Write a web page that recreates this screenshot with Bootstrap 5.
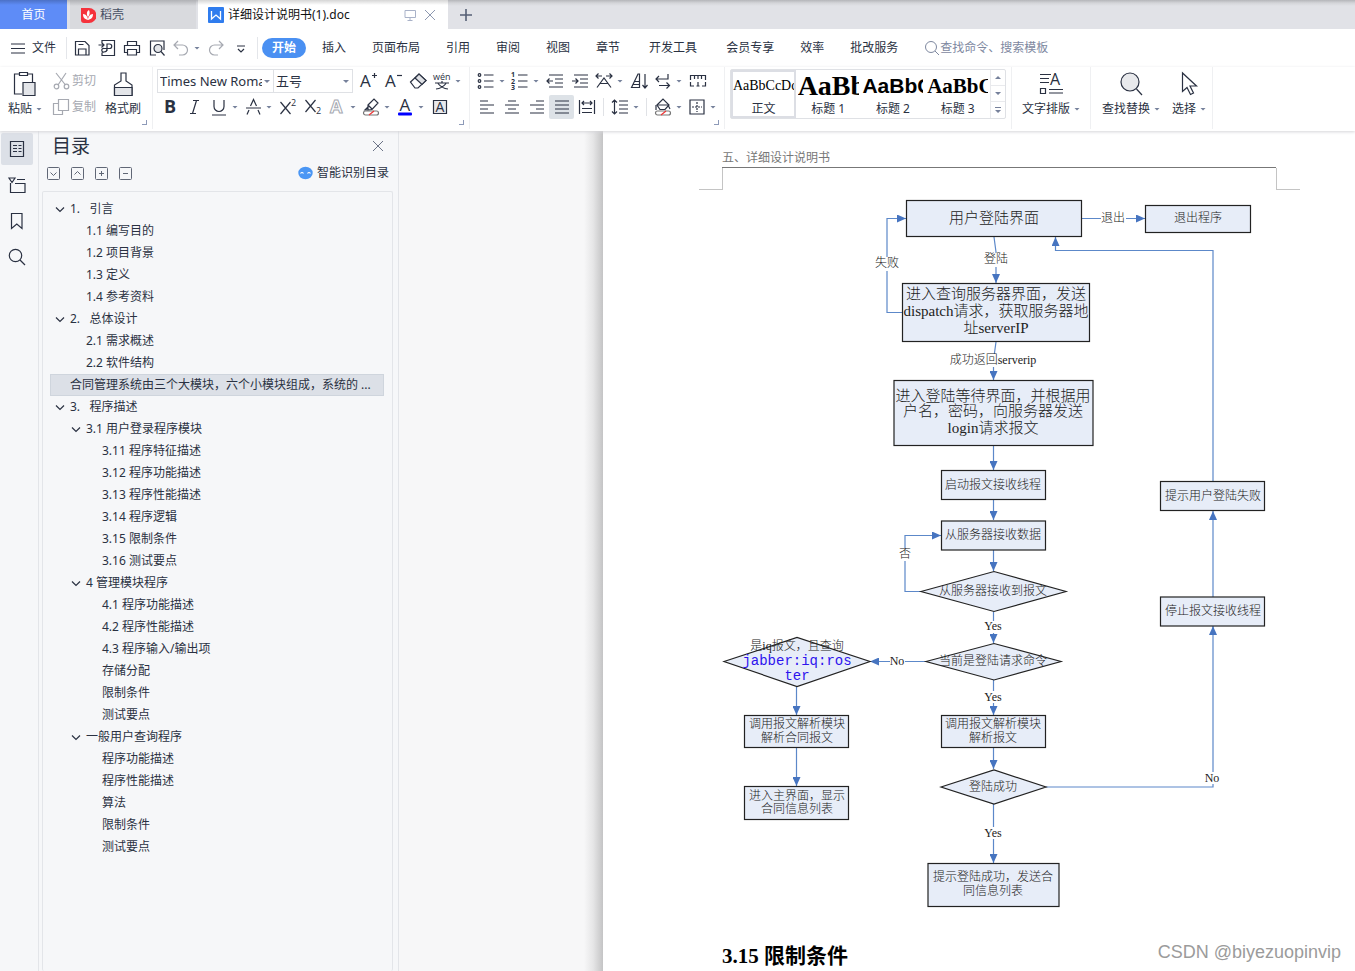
<!DOCTYPE html>
<html lang="zh-CN">
<head>
<meta charset="utf-8">
<meta name="viewport" content="width=device-width, initial-scale=1">
<title>详细设计说明书(1).doc</title>
<link rel="stylesheet" href="https://cdn.jsdelivr.net/npm/bootstrap@5.3.0/dist/css/bootstrap.min.css">
<style>
:root{--ink:#2a3142;--muted:#7e889f;--line:#e3e5e9;--pane:#f6f7f9}
body{font:12px/18px "Noto Sans","Noto Sans CJK SC",sans-serif;color:var(--ink);background:#f7f7f8;overflow:hidden}
button{font:inherit;color:inherit;background:none;border:0;padding:0}
a{color:inherit;text-decoration:none}
svg{display:block;flex:none}
.ico{width:20px;height:20px;fill:none;stroke:var(--ink);stroke-width:1.2;overflow:visible}
.ico text,.big text{stroke:none;fill:var(--ink);font-family:"Open Sans",sans-serif}
.big{width:28px;height:28px;fill:none;stroke:var(--ink);stroke-width:1.2;overflow:visible}
.off,.off .ico{color:#a6a9b1;stroke:#a6a9b1}
.tri{width:6px;height:3px;background:#76819b;clip-path:polygon(0 0,100% 0,50% 100%);flex:none}
/* title tabs */
.tabstrip{height:29px;background:linear-gradient(#b4b5b9,#d4d5d9 3px,#e1e2e7 6px)}
.tab-home{width:67px;background:linear-gradient(#4c71c6,#5e8cf7 5px);color:#fff}
.tab-docer{width:126px;margin-left:3px;padding-left:10px;background:linear-gradient(#b0b1b5,#d9dade 6px);color:#475064}
.tab-doc{width:250px;margin-left:2px;padding-left:10px;background:linear-gradient(#d5d5d5,#fff 5px);color:#111}
/* menu */
.menubar{height:38px;background:#fff}
.menubar .item{padding:0 13px}
.menubar .wide{margin:0 3px}
.menubar .pill{width:44px;height:20px;border-radius:10px;background:#4a90f2;color:#fff;font-weight:bold;margin-right:3px}
.menubar .file{padding:0 10px 0 8px}
.quick{padding-left:2px}
.vr-line{width:1px;background:#e4e6ea}
.qa{width:25px;display:flex;justify-content:center;align-items:center}
.finder{width:130px;border:0;outline:0;padding:0;color:var(--muted)}
.finder::placeholder{color:var(--muted);opacity:1}
/* ribbon */
.ribbon{height:64px;background:#fff;box-shadow:0 1px 3px #d5d6d9;position:relative;z-index:2}
.group{border-right:1px solid #eff0f2;height:62px;position:relative}
.launch::after{content:"";position:absolute;right:5px;bottom:4px;width:5px;height:5px;border:solid #8d9ab8;border-width:0 1px 1px 0}
.g-clip{width:153px;padding:3px 0 0 8px}
.g-font{width:317px;padding:1px 0 0 4px}
.g-para{width:255px;padding:1px 0 0 4px}
.g-style{width:287px;padding:2px 0 0 5px}
.g-type{width:79px;padding-top:3px}
.g-find{width:122px;padding:3px 0 0 11px}
.clip-side{margin:-2px 9px 0 10px}
.trow{height:26px;display:flex;align-items:center}
.t{width:25px;height:24px;display:flex;align-items:center;justify-content:center;border-radius:2px}
.td{width:34px;height:24px;display:flex;align-items:center;padding-left:2px;gap:3px}
.t.sel{background:#dde2e7}
.gap-line{width:9px;height:18px;background:linear-gradient(#e0e2e6,#e0e2e6) 4px 0/1px 100% no-repeat}
.combo{position:relative;height:24px;border:1px solid #dfe1e5}
.combo select{appearance:none;border:0;background:none;font:13px/20px "Noto Sans","Noto Sans CJK SC",sans-serif;color:var(--ink);width:100%;height:22px;padding:0 11px 0 2px}
.combo .tri{position:absolute;right:3px;top:10px;pointer-events:none}
.c-face{width:117px}.c-size{width:79px;margin-right:2px}
.stack{display:flex;flex-direction:column;align-items:center;justify-content:space-between;height:48px}
.gallery{width:276px;height:50px;border:1px solid #dfe1e5;border-radius:2px}
.style-item{width:65px;height:48px;overflow:hidden;display:flex;flex-direction:column;align-items:center;justify-content:flex-end}
.style-item .demo{width:61px;overflow:hidden;white-space:nowrap;text-align:left;color:#000;height:28px;line-height:28px}
.style-item.on{box-shadow:inset 0 0 0 2px #dcdee4}
.d0{font-family:"Liberation Serif",serif;font-size:14px}
.d1{font-family:"Liberation Serif",serif;font-size:28px;font-weight:bold}
.d2{font-family:"Liberation Sans",sans-serif;font-size:21px;font-weight:bold}
.d3{font-family:"Liberation Serif",serif;font-size:21px;font-weight:bold}
.spin{width:15px;border-left:1px solid #e9eaed}
.spin button{height:16px;display:flex;flex-direction:column;gap:2px;align-items:center;justify-content:center;border-bottom:1px solid #e9eaed}
.spin .up{rotate:180deg}
.spin .dash{width:6px;height:1px;background:#76819b}
/* side */
.rail{width:39px;background:var(--pane);border-right:1px solid var(--line);padding-top:2px}
.rail button{width:32px;height:32px;margin:0 0 4px 1px;display:flex;align-items:center;justify-content:center;border-radius:2px}
.rail .sel{background:#dce0e7}
.outline{width:360px;background:var(--pane);border-right:1px solid var(--line);padding:0 5px 0 3px}
.outline h1{font-size:19px;line-height:30px;font-weight:400;margin:0}
.outline .head{padding:0 9px 0 10px}
.outline .tools{padding:3px 4px 0 5px;gap:11px}
.tree{border:1px solid var(--line);border-bottom:0;border-radius:2px;padding:6px 8px 0 7px;margin:9px 0 0}
.tree a{display:flex;align-items:center;height:22px;white-space:pre}
.tree .l1{padding-left:4px}.tree .l2{padding-left:20px}.tree .l3{padding-left:36px}
.tree .l4{padding-left:52px}
.tree .cur{background:#dce0e7;box-shadow:inset 0 0 0 1px #cfd5dd;padding-left:20px}
.tree svg{width:16px;height:16px;fill:none;stroke:var(--ink);stroke-width:1.2}
.sq{width:13px;height:13px;stroke:#606776;stroke-width:1;fill:none}
/* document */
.gutter{flex:0 0 204px;background:linear-gradient(90deg,#f7f7f8 185px,#e6e6e7 194px,#c4c4c5)}
.sheet{background:#fff;padding:18px 55px 0 96px;min-width:0}
.runhead{margin:0 24px 0 23px;border-bottom:1px solid #777;color:#777;height:19px;line-height:18px;font-family:"Liberation Serif","Noto Sans CJK SC",serif}
.crop{height:22px}
.crop i{width:24px;border-bottom:1px solid #c4c4c4}
.crop i:first-child{border-right:1px solid #c4c4c4}.crop i:last-child{border-left:1px solid #c4c4c4}
.flow{width:100%;height:auto;font-family:"Liberation Serif","Noto Sans CJK SC",serif;text-anchor:middle}
.flow .n{fill:#e7edf8;stroke:#222;stroke-width:1.2}
.flow .e{fill:none;stroke:#5c88c9;stroke-width:1.2;marker-end:url(#arr)}
.flow .gapbox{fill:#fff}
.flow text{font-size:12px;fill:#222;font-weight:300}
.flow .lg text{font-size:15px}
.flow .code{font:14px "Liberation Mono",monospace;fill:#2d14ee}
.sheet h2{font:bold 21px/28px "Liberation Serif","Noto Sans CJK SC",serif;color:#000;margin:22px 0 0 23px}
.mark-by{position:absolute;right:14px;bottom:6px;font:18px/26px "Liberation Sans",sans-serif;color:#9b9b9b}
</style>
<script src="https://cdn.jsdelivr.net/npm/bootstrap@5.3.0/dist/js/bootstrap.bundle.min.js"></script>
</head>
<body class="d-flex flex-column vh-100 position-relative">

<header class="flex-shrink-0">
<div class="tabstrip d-flex">
  <button class="tab-home" type="button">首页</button>
  <button class="tab-docer d-flex align-items-center" type="button">
    <svg width="16" height="16" viewBox="0 0 16 16" class="me-1"><path d="M1 1h8a7 7 0 0 1 0 15H4a3 3 0 0 1-3-3z" fill="#f5323c"/><path d="M8 13C4 12 3 10 3 7c3 0 5 3 5 6zm0-3C6 7 7 4 9 3c1 2 1 5-1 7zm0 3c0-3 2-6 5-6 0 3-1 5-5 6z" fill="#fff"/></svg>稻壳</button>
  <div class="tab-doc d-flex align-items-center">
    <svg width="16" height="16" viewBox="0 0 16 16" class="me-1"><rect width="16" height="16" rx="1" fill="#2f7cee"/><path d="M3.500 4v8L8 8l4.500 4V4" fill="none" stroke="#fff" stroke-width="1.300"/></svg>
    <span class="flex-grow-1">详细设计说明书(1).doc</span>
    <svg class="me-2" width="12" height="12" viewBox="0 0 12 12" fill="none" stroke="#a9b2c8"><path d="M1 1.500h10.500v7H1zM6 8.500v3M3.500 11.500h5"/></svg>
    <button type="button" aria-label="关闭" class="me-2 pe-1"><svg width="12" height="12" viewBox="0 0 12 12" stroke="#8d98b0"><path d="M1 1l10 10M11 1L1 11"/></svg></button>
  </div>
  <button type="button" aria-label="新建" class="ms-2 ps-1"><svg width="12" height="12" viewBox="0 0 12 12" stroke="#555f75" stroke-width="1.600"><path d="M6 0v12M0 6h12"/></svg></button>
</div>

<nav class="menubar d-flex align-items-center" aria-label="菜单">
  <button type="button" class="file d-flex align-items-center"><svg class="ico" viewBox="0 0 20 20"><path d="M3 6h14M3 10.500h14M3 15h14"/></svg><span class="ms-1">文件</span></button>
  <i class="vr-line align-self-stretch my-2"></i>
  <span class="quick d-flex">
  <button class="qa" type="button" aria-label="保存"><svg class="ico" viewBox="0 0 20 20"><path d="M3.500 3.500h9.500l4 4v9.500h-13.500zM6.500 17v-6h7.500v6M6.500 6.500h5"/></svg></button>
  <button class="qa" type="button" aria-label="输出为PDF"><svg class="ico" viewBox="0 0 20 20"><path d="M5 4.500V2.500h12.500v15H5v-3M1.500 7h5M4.500 4.500L7 7 4.500 9.500M10 13V6h2.500a2.200 2.200 0 0 1 0 4.500H7a1.800 1.800 0 1 0 0 3.500q3 0 3-3"/></svg></button>
  <button class="qa" type="button" aria-label="打印"><svg class="ico" viewBox="0 0 20 20"><path d="M5.500 7.500v-4h9v4M5.500 14.500H2.500v-7h15v7h-3M5.500 11.500h9v5.500h-9z"/></svg></button>
  <button class="qa" type="button" aria-label="打印预览"><svg class="ico" viewBox="0 0 20 20"><path d="M9 17H3.500V3H17v9"/><circle cx="11" cy="10.500" r="4" fill="#e3e5e9"/><path d="M14 13.500l3.500 4"/></svg></button>
  <button class="td off" type="button" aria-label="撤销"><svg class="ico" viewBox="0 0 20 20"><path d="M7 3L3 7l4 4M3 7h8.500a5 5 0 0 1 0 10H8"/></svg><i class="tri"></i></button>
  <button class="qa off" type="button" aria-label="恢复"><svg class="ico" viewBox="0 0 20 20"><path d="M13 3l4 4-4 4M17 7H8.500a5 5 0 0 0 0 10H12"/></svg></button>
  <button class="qa" type="button" aria-label="更多"><svg class="ico" viewBox="0 0 20 20"><path d="M6 8h8M7 11l3 3 3-3"/></svg></button>
  </span>
  <i class="vr-line align-self-stretch my-2 ms-1 me-1"></i>
  <button type="button" class="pill">开始</button>
  <button type="button" class="item">插入</button><button type="button" class="item">页面布局</button><button type="button" class="item">引用</button><button type="button" class="item">审阅</button><button type="button" class="item">视图</button><button type="button" class="item">章节</button><button type="button" class="item wide">开发工具</button><button type="button" class="item">会员专享</button><button type="button" class="item">效率</button><button type="button" class="item">批改服务</button>
  <label class="d-flex align-items-center ms-2 ps-1"><svg width="17" height="16" viewBox="0 0 17 16" fill="none" stroke="#7e889f"><circle cx="8" cy="7" r="5.500"/><path d="M12 11l4 4"/></svg><input class="finder" aria-label="查找命令、搜索模板" placeholder="查找命令、搜索模板"></label>
</nav>

<div class="ribbon d-flex">
  <div class="group launch g-clip d-flex">
    <button type="button" class="stack"><svg class="big" viewBox="0 0 28 28"><path d="M9 4H3.500v20H11M17 4h4.500v8M8.500 2.500h8v3h-8z"/><path d="M12 12.500h12v13H12z" fill="#e3e5e9"/></svg><span class="d-flex align-items-center gap-1">粘贴<i class="tri"></i></span></button>
    <div class="clip-side d-flex flex-column off">
      <button type="button" class="trow"><svg class="ico" viewBox="0 0 20 20"><path d="M4 2l9.500 12M14 2L6 14"/><circle cx="4.500" cy="15.500" r="2.300"/><circle cx="14.500" cy="15.500" r="2.300"/></svg>剪切</button>
      <button type="button" class="trow"><svg class="ico" viewBox="0 0 20 20"><path d="M6.500 2.500h10v11h-10zM6.500 6.500h-5v11h9v-4"/></svg>复制</button>
    </div>
    <button type="button" class="stack"><svg class="big" viewBox="0 0 28 28"><path d="M12 11V3h5v8l6 4v10.500H5.500V15z"/><path d="M5.500 17.500H23v8H5.500z" fill="#e3e5e9"/></svg>格式刷</button>
  </div>

  <div class="group launch g-font">
    <div class="trow">
      <div class="combo c-face"><select aria-label="字体"><option>Times New Roman</option></select><i class="tri"></i></div>
      <div class="combo c-size border-start-0"><select aria-label="字号"><option>五号</option></select><i class="tri"></i></div>
      <button class="t" type="button" aria-label="增大字号"><svg class="ico" viewBox="0 0 20 20"><text x="2" y="16" font-size="17">A</text><path d="M14 4.500h5M16.500 2v5"/></svg></button>
      <button class="t" type="button" aria-label="减小字号"><svg class="ico" viewBox="0 0 20 20"><text x="2" y="16" font-size="17">A</text><path d="M14 4.500h5"/></svg></button>
      <button class="t" type="button" aria-label="清除格式"><svg class="ico" viewBox="0 0 20 20"><path d="M2.500 11L11 3l7 6.500-8 7.500H7z"/><path d="M7 7l7 6.500 4-4L11 3z" fill="#dfe1e5"/></svg></button>
      <button class="td" type="button" aria-label="拼音指南"><svg class="ico" viewBox="0 0 20 20"><text x="1" y="9" font-size="9">wén</text><path d="M3 12h14M10 10v2M6 12.500q4 5 10 5.500M14 12.500q-4 5-10 5.500"/></svg><i class="tri"></i></button>
    </div>
    <div class="trow">
      <button class="t" type="button" aria-label="加粗"><svg class="ico" viewBox="0 0 20 20"><text x="4" y="16" font-size="18" font-weight="bold">B</text></svg></button>
      <button class="t" type="button" aria-label="倾斜"><svg class="ico" viewBox="0 0 20 20"><path d="M8 3.500h6M5 16.500h6M11.500 3.500l-4 13"/></svg></button>
      <button class="td" type="button" aria-label="下划线"><svg class="ico" viewBox="0 0 20 20"><path d="M5 3v6.500a5 5 0 0 0 10 0V3M3 18h14"/></svg><i class="tri"></i></button>
      <button class="td" type="button" aria-label="删除线"><svg class="ico" viewBox="0 0 20 20"><path d="M3 11h15M7.500 9L10.500 2.500 13.500 9M6 13l-2 4.500M15 13l2 4.500"/></svg><i class="tri"></i></button>
      <button class="t" type="button" aria-label="上标"><svg class="ico" viewBox="0 0 20 20"><path d="M2.500 5l10 12M12.500 5l-10 12"/><text x="13" y="9" font-size="9">2</text></svg></button>
      <button class="t" type="button" aria-label="下标"><svg class="ico" viewBox="0 0 20 20"><path d="M2.500 3l10 12M12.500 3l-10 12"/><text x="13" y="17" font-size="9">2</text></svg></button>
      <button class="td" type="button" aria-label="文字效果"><svg class="ico" viewBox="0 0 20 20"><text x="3" y="16" font-size="18" font-weight="bold" style="fill:#fff;stroke:#a6a9b1;stroke-width:1">A</text></svg><i class="tri"></i></button>
      <button class="td" type="button" aria-label="突出显示"><svg class="ico" viewBox="0 0 20 20"><path d="M7 8l6-6 4 4-6 6.500-4 .5zM7 8l4 4M7 10l-3 3h5"/><rect x="2.500" y="14" width="15" height="4" rx="2" stroke="#777"/><path d="M8 18l5-4" stroke="#e33"/></svg><i class="tri"></i></button>
      <button class="td" type="button" aria-label="字体颜色"><svg class="ico" viewBox="0 0 20 20"><text x="4.500" y="14" font-size="17">A</text><rect x="3" y="15.500" width="14" height="3" rx="1" fill="#00f" stroke="none"/></svg><i class="tri"></i></button>
      <button class="t" type="button" aria-label="字符底纹"><svg class="ico" viewBox="0 0 20 20"><path d="M3.500 3.500h13v13h-13z" fill="#e8e9ec"/><text x="5.500" y="15" font-size="14">A</text></svg></button>
    </div>
  </div>

  <div class="group launch g-para">
    <div class="trow">
      <button class="td" type="button" aria-label="项目符号"><svg class="ico" viewBox="0 0 20 20"><path d="M8 4h9.500M8 10h9.500M8 16h9.500"/><circle cx="3.500" cy="4" r="1.300"/><circle cx="3.500" cy="10" r="1.300"/><circle cx="3.500" cy="16" r="1.300"/></svg><i class="tri"></i></button>
      <button class="td" type="button" aria-label="编号"><svg class="ico" viewBox="0 0 20 20"><path d="M8 4h9.500M8 10h9.500M8 16h9.500"/><text x="1" y="6" font-size="7" font-weight="bold">1</text><text x="1" y="12.500" font-size="7" font-weight="bold">2</text><text x="1" y="19" font-size="7" font-weight="bold">3</text></svg><i class="tri"></i></button>
      <button class="t" type="button" aria-label="减少缩进"><svg class="ico" viewBox="0 0 20 20"><path d="M4 4h14M10 8h8M10 12h8M4 16h14M2 10h6M4.500 7.500L2 10l2.500 2.500"/></svg></button>
      <button class="t" type="button" aria-label="增加缩进"><svg class="ico" viewBox="0 0 20 20"><path d="M4 4h14M10 8h8M10 12h8M4 16h14M2 10h6M5.500 7.500L8 10l-2.500 2.500"/></svg></button>
      <button class="td" type="button" aria-label="中文版式"><svg class="ico" viewBox="0 0 20 20"><path d="M3 16.500L10 7l7 9.500M6 12.500h8M2 5h6M4.500 2.500L2 5l2.500 2.500M18 5h-6M15.500 2.500L18 5l-2.500 2.500"/></svg><i class="tri"></i></button>
      <button class="t" type="button" aria-label="排序"><svg class="ico" viewBox="0 0 20 20"><path d="M2.500 16.500L9 3h1.500v13.500zM6 10.500h4.500M4.500 13.500h6M16 3v13.500M13.500 14l2.500 3 2.500-3"/></svg></button>
      <button class="td" type="button" aria-label="换行"><svg class="ico" viewBox="0 0 20 20"><path d="M15 3v5H3M6 5L3 8l3 3M6 14.500h10.500M13.500 11.500l3 3-3 3"/></svg><i class="tri"></i></button>
      <button class="t" type="button" aria-label="制表位"><svg class="ico" viewBox="0 0 20 20"><path d="M2.500 9V4.500h15V9M6.500 5v3M10 5v3M13.500 5v3M2.500 11v4H6M8.500 15h3M10 11v4M14 15h3.500v-4"/></svg></button>
    </div>
    <div class="trow">
      <button class="t" type="button" aria-label="左对齐"><svg class="ico" viewBox="0 0 20 20"><path d="M3 4h8M3 8h14M3 12h8M3 16h14"/></svg></button>
      <button class="t" type="button" aria-label="居中"><svg class="ico" viewBox="0 0 20 20"><path d="M6 4h8M3 8h14M6 12h8M3 16h14"/></svg></button>
      <button class="t" type="button" aria-label="右对齐"><svg class="ico" viewBox="0 0 20 20"><path d="M9 4h8M3 8h14M9 12h8M3 16h14"/></svg></button>
      <button class="t sel" type="button" aria-label="两端对齐" aria-pressed="true"><svg class="ico" viewBox="0 0 20 20"><path d="M3 4h14M3 8h14M3 12h14M3 16h14"/></svg></button>
      <button class="t" type="button" aria-label="分散对齐"><svg class="ico" viewBox="0 0 20 20"><path d="M2.500 3v14M17.500 3v14M5 11.500h10M5 15.500h10M5 6h10M7 4L5 6l2 2M13 4l2 2-2 2"/></svg></button>
      <i class="gap-line"></i>
      <button class="td" type="button" aria-label="行距"><svg class="ico" viewBox="0 0 20 20"><path d="M9 4h9M9 8h9M9 12h9M9 16h9M4.500 3v14M2 5.500L4.500 3 7 5.500M2 14.500L4.500 17 7 14.500"/></svg><i class="tri"></i></button>
      <i class="gap-line"></i>
      <button class="td" type="button" aria-label="底纹颜色"><svg class="ico" viewBox="0 0 20 20"><path d="M4 8l6-6 6 6-4 4.500H7z"/><path d="M5 8h10l2 4M3 8v5"/><rect x="2.500" y="14" width="15" height="4" rx="2" stroke="#777"/><path d="M8 18l5-4" stroke="#e33"/></svg><i class="tri"></i></button>
      <button class="td" type="button" aria-label="边框"><svg class="ico" viewBox="0 0 20 20"><path d="M3 3h14v14H3z"/><path d="M10 5v10M5 10h10" stroke-dasharray="2 1"/></svg><i class="tri"></i></button>
    </div>
  </div>

  <div class="group g-style">
    <div class="gallery d-flex">
      <button type="button" class="style-item on"><span class="demo d0">AaBbCcDd</span>正文</button>
      <button type="button" class="style-item"><span class="demo d1">AaBb</span>标题 1</button>
      <button type="button" class="style-item"><span class="demo d2">AaBbC</span>标题 2</button>
      <button type="button" class="style-item"><span class="demo d3">AaBbC</span>标题 3</button>
      <div class="spin d-flex flex-column"><button type="button" aria-label="上一行"><i class="tri up"></i></button><button type="button" aria-label="下一行"><i class="tri"></i></button><button type="button" aria-label="更多样式" class="border-0"><i class="dash"></i><i class="tri"></i></button></div>
    </div>
  </div>

  <div class="group g-type d-flex justify-content-center">
    <button type="button" class="stack"><svg class="big" viewBox="0 0 28 28"><path d="M3 4.500h11M3 8.500h9M3 12.500h9M12 19.500h14M12 23h14M3.500 18.500h5v5h-5z"/><text x="13" y="15" font-size="16">A</text></svg><span class="d-flex align-items-center gap-1">文字排版<i class="tri"></i></span></button>
  </div>
  <div class="group g-find d-flex">
    <button type="button" class="stack"><svg class="big" viewBox="0 0 28 28"><circle cx="13" cy="12" r="9" fill="#e8e9ec"/><path d="M19.500 19l5.500 6"/></svg><span class="d-flex align-items-center gap-1">查找替换<i class="tri"></i></span></button>
    <button type="button" class="stack ms-2 ps-1"><svg class="big" viewBox="0 0 28 28"><path d="M7.500 3v18.500l4.500-4 3.500 7 3-1.500-3.500-7h6.500z"/></svg><span class="d-flex align-items-center gap-1">选择<i class="tri"></i></span></button>
  </div>
</div>
</header>

<main class="d-flex flex-grow-1 overflow-hidden">
  <nav class="rail flex-shrink-0" aria-label="导航窗格">
    <button type="button" class="sel" aria-label="目录"><svg class="ico" viewBox="0 0 20 20"><path d="M3.500 2.500h13v15h-13zM6 6.500h4M11.500 6.500h3M6 9.500h4M11.500 9.500h3M6 12.500h4M11.500 12.500h3"/></svg></button>
    <button type="button" aria-label="章节"><svg class="ico" viewBox="0 0 20 20"><path d="M2 3h6L5 7.500zM10 4.500h8M3.500 8v9.500H18V8.500H8"/></svg></button>
    <button type="button" aria-label="书签"><svg class="ico" viewBox="0 0 20 20"><path d="M4.500 2.500h10.500v15l-5.200-4.500-5.300 4.500z"/></svg></button>
    <button type="button" aria-label="查找"><svg class="ico" viewBox="0 0 20 20"><circle cx="8.500" cy="8.500" r="6.200"/><path d="M13 13l5 5"/></svg></button>
  </nav>

  <aside class="outline flex-shrink-0 d-flex flex-column">
    <div class="head d-flex justify-content-between align-items-center"><h1>目录</h1><button type="button" aria-label="关闭目录"><svg width="12" height="12" viewBox="0 0 12 12" stroke="#6b7386"><path d="M1 1l10 10M11 1L1 11"/></svg></button></div>
    <div class="tools d-flex align-items-center">
      <button type="button" aria-label="展开"><svg class="sq" viewBox="0 0 13 13"><rect x=".5" y=".5" width="12" height="12" rx="1"/><path d="M3.500 5.500l3 3 3-3"/></svg></button>
      <button type="button" aria-label="收起"><svg class="sq" viewBox="0 0 13 13"><rect x=".5" y=".5" width="12" height="12" rx="1"/><path d="M3.500 7.500l3-3 3 3"/></svg></button>
      <button type="button" aria-label="升级"><svg class="sq" viewBox="0 0 13 13"><rect x=".5" y=".5" width="12" height="12" rx="1"/><path d="M4 6.500h5M6.500 4v5"/></svg></button>
      <button type="button" aria-label="降级"><svg class="sq" viewBox="0 0 13 13"><rect x=".5" y=".5" width="12" height="12" rx="1"/><path d="M4 6.500h5"/></svg></button>
      <button type="button" class="ms-auto d-flex align-items-center gap-1"><svg width="15" height="14" viewBox="0 0 15 14"><ellipse cx="7.500" cy="7" rx="7.200" ry="6.200" fill="#4a96f4"/><path d="M2.500 7.500q1.500-2 3 0M9.500 7.500q1.500-2 3 0" fill="none" stroke="#fff" stroke-width="1.200"/></svg>智能识别目录</button>
    </div>
    <div class="tree flex-grow-1" id="toc"></div>
  </aside>

  <div class="gutter"></div>
  <article class="sheet flex-grow-1">
    <div class="runhead">五、详细设计说明书</div>
    <div class="crop d-flex justify-content-between"><i></i><i></i></div>
    <svg class="flow" viewBox="699 190 601 730" role="img" aria-label="用户登录程序流程图">
      <defs><marker id="arr" viewBox="0 0 9 8" refX="9" refY="4" markerWidth="9" markerHeight="8" markerUnits="userSpaceOnUse" orient="auto"><path d="M0 0l9 4-9 4z" fill="#4674c0"/></marker></defs>
      <g>
        <path class="e" d="M1081 218.500H1145"/><path class="e" d="M902 312.500H887V218.500H906"/>
        <path class="e" d="M994 237L996 252V283"/><path class="e" d="M996 342L993.500 360V380"/>
        <path class="e" d="M993.500 446V470"/><path class="e" d="M993.500 500V520"/><path class="e" d="M993.500 550V571"/>
        <path class="e" d="M921 591.500H905V535.500H941"/><path class="e" d="M993.500 612V643"/><path class="e" d="M926 661.500H870"/>
        <path class="e" d="M993.500 680V715"/><path class="e" d="M796.500 687V715"/><path class="e" d="M796.500 748V786"/>
        <path class="e" d="M993.500 748V769"/><path class="e" d="M993.500 804V863"/>
        <path class="e" d="M1046 787H1213V626"/><path class="e" d="M1213 597V511"/><path class="e" d="M1213 481V250.500H1055.500V237"/>
      </g>
      <g class="gapbox"><path d="M1101 212h25v14h-25zM875 257h24v14h-24zM983 253h25v14h-25zM950 354h88v13h-88zM898 548h14v13h-14zM984 621h19v12h-19zM890 656h15v11h-15zM984 691h19v12h-19zM984 827h19v12h-19zM1204 772h17v12h-17z"/></g>
      <g class="n">
        <rect x="906.500" y="200.500" width="175" height="36"/><rect x="1145.500" y="205.500" width="105" height="27"/>
        <rect x="902.500" y="283.500" width="187" height="58"/><rect x="894" y="380.500" width="199" height="65"/>
        <rect x="941.500" y="470.500" width="104" height="29"/><rect x="941.500" y="521" width="104" height="29"/>
        <path d="M921 591.500l73-20 72 20-72 20z"/><path d="M926 661.500l68-18 67 18-67 18.500z"/><path d="M724 661.500l73-24 73 24-73 25z"/>
        <rect x="744.500" y="715.500" width="104" height="32"/><rect x="744.500" y="786.500" width="104" height="33"/><rect x="941.500" y="715.500" width="104" height="32"/>
        <path d="M941 787l53-17 52 17-52 17z"/><rect x="928" y="863.500" width="131" height="43"/>
        <rect x="1160.500" y="481.500" width="104" height="29"/><rect x="1160.500" y="597" width="104" height="29"/>
      </g>
      <g class="lg">
        <text x="994" y="223">用户登陆界面</text>
        <text x="996" y="299">进入查询服务器界面，发送</text><text x="996" y="316">dispatch请求，获取服务器地</text><text x="996" y="333">址serverIP</text>
        <text x="993" y="401">进入登陆等待界面，并根据用</text><text x="993" y="416">户名，密码，向服务器发送</text><text x="993" y="433">login请求报文</text>
      </g>
      <text x="1113" y="222">退出</text><text x="1198" y="222">退出程序</text><text x="887" y="267">失败</text><text x="996" y="263">登陆</text>
      <text x="993" y="364">成功返回serverip</text><text x="993" y="489">启动报文接收线程</text><text x="993" y="539">从服务器接收数据</text><text x="905" y="558">否</text>
      <text x="993" y="595">从服务器接收到报文</text><text x="993" y="630">Yes</text><text x="993" y="665">当前是登陆请求命令</text><text x="897" y="665">No</text>
      <text x="797" y="650">是iq报文，且查询</text><text class="code" x="797" y="665">jabber:iq:ros</text><text class="code" x="797" y="680">ter</text>
      <text x="993" y="701">Yes</text><text x="797" y="728">调用报文解析模块</text><text x="797" y="742">解析合同报文</text>
      <text x="993" y="728">调用报文解析模块</text><text x="993" y="742">解析报文</text>
      <text x="797" y="800">进入主界面，显示</text><text x="797" y="813">合同信息列表</text><text x="993" y="791">登陆成功</text><text x="993" y="837">Yes</text>
      <text x="993" y="881">提示登陆成功，发送合</text><text x="993" y="895">同信息列表</text>
      <text x="1213" y="500">提示用户登陆失败</text><text x="1213" y="615">停止报文接收线程</text><text x="1212" y="782">No</text>
    </svg>
    <h2>3.15 限制条件</h2>
  </article>
</main>
<div class="mark-by">CSDN @biyezuopinvip</div>

<script>
// Outline entries: [level, text, expandable, current]
const toc=[[1,'1.   引言',1],[3,'1.1 编写目的'],[3,'1.2 项目背景'],[3,'1.3 定义'],[3,'1.4 参考资料'],[1,'2.   总体设计',1],[3,'2.1 需求概述'],[3,'2.2 软件结构'],
[2,'合同管理系统由三个大模块，六个小模块组成，系统的 ...',0,1],[1,'3.   程序描述',1],[2,'3.1 用户登录程序模块',1],
[4,'3.11 程序特征描述'],[4,'3.12 程序功能描述'],[4,'3.13 程序性能描述'],[4,'3.14 程序逻辑'],[4,'3.15 限制条件'],[4,'3.16 测试要点'],
[2,'4 管理模块程序',1],[4,'4.1 程序功能描述'],[4,'4.2 程序性能描述'],[4,'4.3 程序输入/输出项'],[4,'存储分配'],[4,'限制条件'],[4,'测试要点'],
[2,'一般用户查询程序',1],[4,'程序功能描述'],[4,'程序性能描述'],[4,'算法'],[4,'限制条件'],[4,'测试要点']];
document.getElementById('toc').innerHTML=toc.map(([l,t,open,cur])=>
 `<a href="#" class="l${l}${cur?' cur':''}">${open?'<svg viewBox="0 0 16 16"><path d="M2 6.500l4 4 4-4"/></svg>':''}<span>${t}</span></a>`).join('');
</script>
</body>
</html>
